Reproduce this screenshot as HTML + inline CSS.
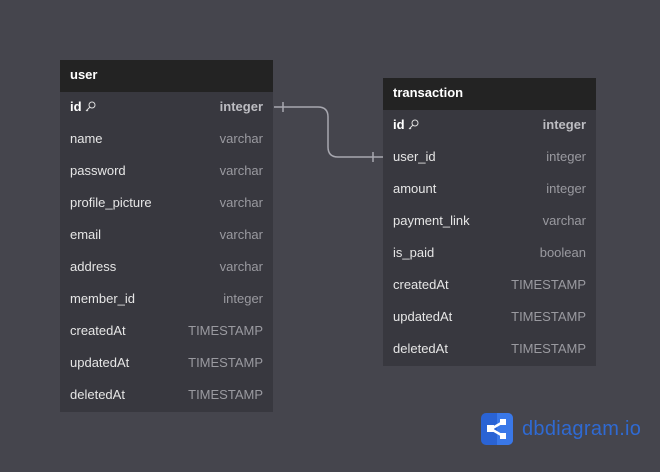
<!DOCTYPE html>
<html><head><style>
body{margin:0;width:660px;height:472px;background:#45454d;font-family:"Liberation Sans",sans-serif;position:relative;overflow:hidden}
.t{position:absolute;width:213px;background:#38383f}
.h{height:32px;background:#232323;color:#fff;font-weight:bold;font-size:13px;line-height:29px;padding-left:10px}
.r{height:32px;line-height:30px;font-size:13px;color:#e6e6e6;padding:0 10px;display:flex;justify-content:space-between}
.r span:last-child{color:#9a9aa0}
.r.k{font-weight:bold;color:#fff}
.r.k span:last-child{color:#bdbdc2}
.key{display:inline-block;vertical-align:-1px;margin-left:3px}
</style></head><body>
<svg style="position:absolute;left:0;top:0" width="660" height="472">
<path d="M274 107 H318 Q328 107 328 117 V147 Q328 157 338 157 H383" fill="none" stroke="#a8a8b0" stroke-width="1.5"/>
<path d="M283 102 V112 M373 152 V162" stroke="#a8a8b0" stroke-width="1.5"/>
</svg>
<div class="t" style="left:60px;top:60px">
<div class="h">user</div>
<div class="r k"><span>id<svg class="key" width="11" height="11" viewBox="0 0 11 11"><circle cx="7" cy="4" r="3" fill="none" stroke="#ddd" stroke-width="1"/><path d="M5 6 L1 10 M2 9 L3 10" stroke="#ddd" stroke-width="1"/></svg></span><span>integer</span></div>
<div class="r"><span>name</span><span>varchar</span></div>
<div class="r"><span>password</span><span>varchar</span></div>
<div class="r"><span>profile_picture</span><span>varchar</span></div>
<div class="r"><span>email</span><span>varchar</span></div>
<div class="r"><span>address</span><span>varchar</span></div>
<div class="r"><span>member_id</span><span>integer</span></div>
<div class="r"><span>createdAt</span><span>TIMESTAMP</span></div>
<div class="r"><span>updatedAt</span><span>TIMESTAMP</span></div>
<div class="r"><span>deletedAt</span><span>TIMESTAMP</span></div>
</div>
<div class="t" style="left:383px;top:78px">
<div class="h">transaction</div>
<div class="r k"><span>id<svg class="key" width="11" height="11" viewBox="0 0 11 11"><circle cx="7" cy="4" r="3" fill="none" stroke="#ddd" stroke-width="1"/><path d="M5 6 L1 10 M2 9 L3 10" stroke="#ddd" stroke-width="1"/></svg></span><span>integer</span></div>
<div class="r"><span>user_id</span><span>integer</span></div>
<div class="r"><span>amount</span><span>integer</span></div>
<div class="r"><span>payment_link</span><span>varchar</span></div>
<div class="r"><span>is_paid</span><span>boolean</span></div>
<div class="r"><span>createdAt</span><span>TIMESTAMP</span></div>
<div class="r"><span>updatedAt</span><span>TIMESTAMP</span></div>
<div class="r"><span>deletedAt</span><span>TIMESTAMP</span></div>
</div>
<svg style="position:absolute;left:481px;top:413px" width="32" height="32" viewBox="0 0 32 32">
<rect width="32" height="32" rx="5" fill="#2a63d4"/>
<path d="M16 0 H27 A5 5 0 0 1 32 5 V27 A5 5 0 0 1 27 32 H16Z" fill="#3a78e8"/>
<path d="M10 16 L22 9 M10 16 L22 23" stroke="#fff" stroke-width="2.5"/>
<rect x="6" y="12" width="7" height="7" fill="#fff"/><rect x="19" y="6" width="6" height="6" fill="#fff"/><rect x="19" y="20" width="6" height="6" fill="#fff"/>
</svg>
<div style="position:absolute;left:522px;top:418px;font-size:20px;color:#2f6ad3;letter-spacing:0.3px">dbdiagram.io</div>
</body></html>
